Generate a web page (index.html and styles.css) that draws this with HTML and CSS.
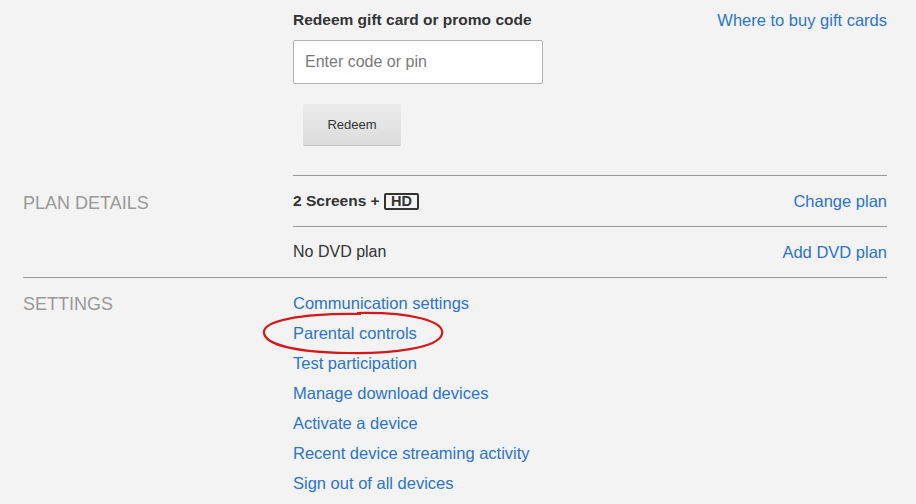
FILE: index.html
```html
<!DOCTYPE html>
<html lang="en">
<head>
    <meta charset="UTF-8">
    <title>Account</title>
    <link rel="stylesheet" href="styles.css">
</head>
<body>
    <div class="account">
        <div class="redeem">
            <div class="redeem-main">
                <h4 class="redeem-title">Redeem gift card or promo code</h4>
                <input class="code-input" type="text" placeholder="Enter code or pin">
                <button class="redeem-btn">Redeem</button>
            </div>
            <a class="link" href="#">Where to buy gift cards</a>
        </div>

        <section class="block">
            <h2 class="block-label">PLAN DETAILS</h2>
            <div class="block-body">
                <div class="row">
                    <span class="plan-name">2 Screens + <span class="hd">HD</span></span>
                    <a class="link" href="#">Change plan</a>
                </div>
                <div class="row">
                    <span class="plain">No DVD plan</span>
                    <a class="link" href="#">Add DVD plan</a>
                </div>
            </div>
        </section>

        <section class="block settings">
            <h2 class="block-label">SETTINGS</h2>
            <div class="block-body">
                <ul class="link-list">
                    <li><a class="link" href="#">Communication settings</a></li>
                    <li class="marked">
                        <a class="link" href="#">Parental controls</a>
                        <svg class="circle-mark" width="186" height="48" viewBox="0 0 186 48">
                            <path d="M96 4 C150 3 184 12 181 25 C178 39 130 45 86 44 C40 43 5 37 3 24 C1 12 40 4 100 5" fill="none" stroke="#d11a1a" stroke-width="2.2"/>
                        </svg>
                    </li>
                    <li><a class="link" href="#">Test participation</a></li>
                    <li><a class="link" href="#">Manage download devices</a></li>
                    <li><a class="link" href="#">Activate a device</a></li>
                    <li><a class="link" href="#">Recent device streaming activity</a></li>
                    <li><a class="link" href="#">Sign out of all devices</a></li>
                </ul>
            </div>
        </section>
    </div>
</body>
</html>
```

FILE: styles.css
```css
body {
    margin: 0;
    background-color: #f3f3f3;
    font-family: "Liberation Sans", Arial, sans-serif;
    color: #333;
}
.account {
    width: 864px;
    margin-left: 23px;
}
.link {
    color: #2c74c9;
    text-decoration: none;
    font-size: 16.5px;
}
.redeem {
    display: flex;
    justify-content: space-between;
    align-items: flex-start;
    margin-left: 270px;
    padding-top: 10px;
    border-bottom: 1px solid #999;
    box-sizing: border-box;
    height: 176px;
}
.redeem .link {
    line-height: 20px;
}
.redeem-main {
    display: flex;
    flex-direction: column;
    align-items: flex-start;
}
.redeem-title {
    margin: 0;
    font-size: 15.5px;
    line-height: 19px;
    font-weight: bold;
    color: #333;
}
.code-input {
    margin-top: 11px;
    width: 250px;
    height: 44px;
    box-sizing: border-box;
    border: 1px solid #b3b3b3;
    border-radius: 2px;
    background: #fff;
    padding: 0 11px;
    font-family: inherit;
    font-size: 16px;
}
.code-input::placeholder {
    color: #7a7a7a;
}
.redeem-btn {
    margin: 20px 0 0 10px;
    width: 98px;
    height: 41px;
    border: none;
    border-radius: 2px;
    background: linear-gradient(#ececec, #dcdcdc);
    box-shadow: 0 1px 0 rgba(0, 0, 0, 0.2);
    font-family: inherit;
    font-size: 13px;
    line-height: 38px;
    color: #333;
}
.block {
    display: flex;
    border-bottom: 1px solid #999;
}
.block-label {
    width: 270px;
    flex-shrink: 0;
    margin: 0;
    padding-top: 17px;
    font-size: 18px;
    font-weight: normal;
    color: #999;
    line-height: 20px;
}
.block-body {
    flex: 1;
}
.row {
    display: flex;
    justify-content: space-between;
    align-items: center;
    height: 50px;
    border-bottom: 1px solid #999;
}
.row:last-child {
    border-bottom: none;
}
.plan-name {
    font-size: 15.5px;
    font-weight: bold;
    color: #333;
}
.hd {
    display: inline-block;
    border: 2px solid #333;
    border-radius: 2px;
    padding: 0 5px;
    line-height: 13px;
    font-size: 14.5px;
}
.plain {
    font-size: 16px;
    color: #333;
}
.settings {
    border-bottom: none;
}
.settings .block-label {
    padding-top: 16px;
}
.link-list {
    list-style: none;
    margin: 0;
    padding: 10px 0 0;
    font-size: 16.5px;
}
.link-list li {
    line-height: 30px;
}
.marked {
    position: relative;
}
.circle-mark {
    position: absolute;
    left: -32px;
    top: -9px;
}
```
